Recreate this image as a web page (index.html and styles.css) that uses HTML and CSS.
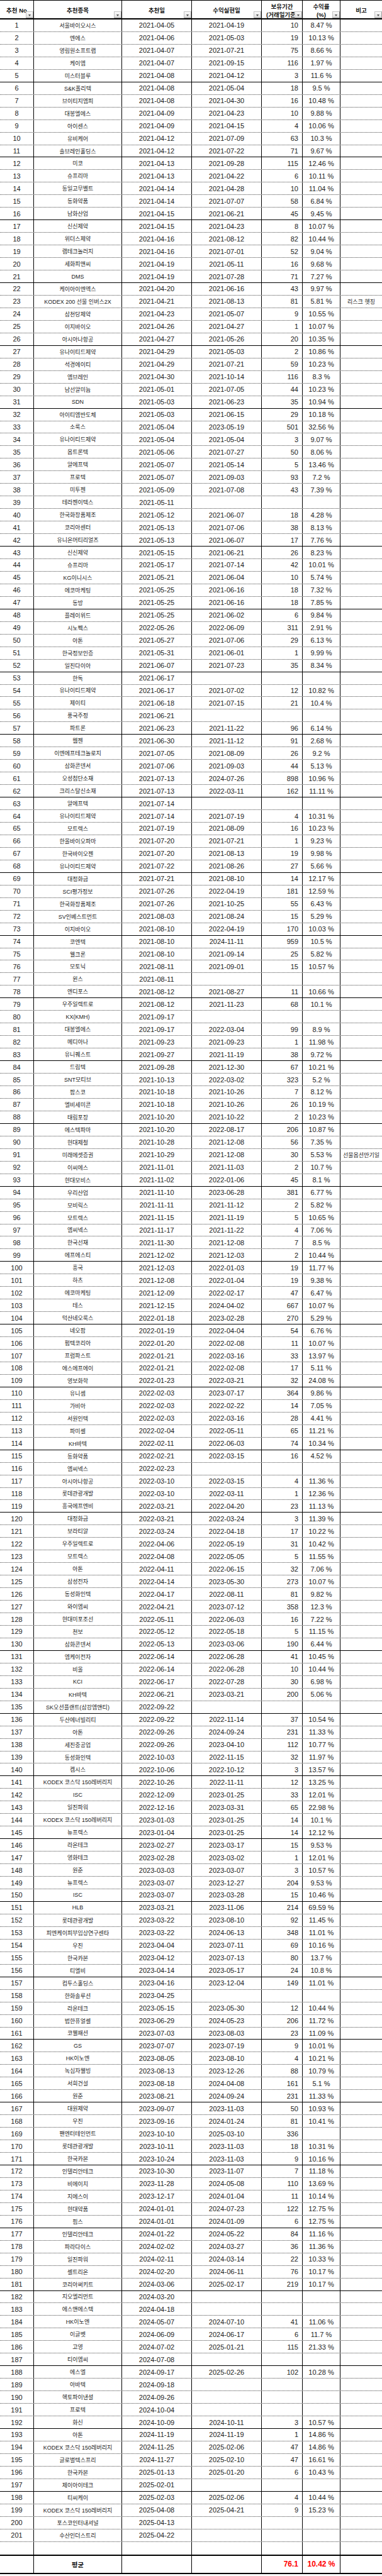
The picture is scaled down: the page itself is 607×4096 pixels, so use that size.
FILE: index.html
```html
<!DOCTYPE html>
<html lang="ko">
<head>
<meta charset="utf-8">
<title>추천종목 수익 현황</title>
<link rel="stylesheet" href="styles.css">
</head>
<body>
<div class="sheet">
  <div class="head">
    <div><span>추천 No</span><i class="fb"></i></div>
    <div><span>추천종목</span><i class="fb"></i></div>
    <div><span>추천일</span><i class="fb"></i></div>
    <div><span>수익실현일</span><i class="fb"></i></div>
    <div><span>보유기간</span><span>(거래일기준)</span><i class="fb"></i></div>
    <div><span>수익률</span><span>(%)</span><i class="fb"></i></div>
    <div><span>비고</span><i class="fb"></i></div>
  </div>
  <div class="row"><span>1</span><span>서울바이오시스</span><span>2021-04-05</span><span>2021-04-19</span><span>10</span><span>8.47 %</span><span></span></div>
  <div class="row"><span>2</span><span>엔에스</span><span>2021-04-06</span><span>2021-05-03</span><span>19</span><span>10.13 %</span><span></span></div>
  <div class="row"><span>3</span><span>영림원소프트랩</span><span>2021-04-07</span><span>2021-07-21</span><span>75</span><span>8.66 %</span><span></span></div>
  <div class="row"><span>4</span><span>케이엠</span><span>2021-04-07</span><span>2021-09-15</span><span>116</span><span>1.97 %</span><span></span></div>
  <div class="row g"><span>5</span><span>미스터블루</span><span>2021-04-08</span><span>2021-04-12</span><span>3</span><span>11.6 %</span><span></span></div>
  <div class="row"><span>6</span><span>S&amp;K폴리텍</span><span>2021-04-08</span><span>2021-05-04</span><span>18</span><span>9.5 %</span><span></span></div>
  <div class="row"><span>7</span><span>브이티지엠피</span><span>2021-04-08</span><span>2021-04-30</span><span>16</span><span>10.48 %</span><span></span></div>
  <div class="row"><span>8</span><span>대봉엘에스</span><span>2021-04-09</span><span>2021-04-23</span><span>10</span><span>9.88 %</span><span></span></div>
  <div class="row"><span>9</span><span>아이센스</span><span>2021-04-09</span><span>2021-04-15</span><span>4</span><span>10.06 %</span><span></span></div>
  <div class="row"><span>10</span><span>유비케어</span><span>2021-04-12</span><span>2021-07-09</span><span>63</span><span>10.3 %</span><span></span></div>
  <div class="row g"><span>11</span><span>솔브레인홀딩스</span><span>2021-04-12</span><span>2021-07-22</span><span>71</span><span>9.67 %</span><span></span></div>
  <div class="row"><span>12</span><span>미코</span><span>2021-04-13</span><span>2021-09-28</span><span>115</span><span>12.46 %</span><span></span></div>
  <div class="row"><span>13</span><span>슈프리마</span><span>2021-04-13</span><span>2021-04-22</span><span>6</span><span>10.11 %</span><span></span></div>
  <div class="row"><span>14</span><span>동일고무벨트</span><span>2021-04-14</span><span>2021-04-28</span><span>10</span><span>11.04 %</span><span></span></div>
  <div class="row"><span>15</span><span>동화약품</span><span>2021-04-14</span><span>2021-07-07</span><span>58</span><span>6.84 %</span><span></span></div>
  <div class="row g"><span>16</span><span>남화산업</span><span>2021-04-15</span><span>2021-06-21</span><span>45</span><span>9.45 %</span><span></span></div>
  <div class="row"><span>17</span><span>신신제약</span><span>2021-04-15</span><span>2021-04-23</span><span>8</span><span>10.07 %</span><span></span></div>
  <div class="row"><span>18</span><span>위더스제약</span><span>2021-04-16</span><span>2021-08-12</span><span>82</span><span>10.44 %</span><span></span></div>
  <div class="row"><span>19</span><span>램테크놀러지</span><span>2021-04-16</span><span>2021-07-01</span><span>52</span><span>9.04 %</span><span></span></div>
  <div class="row"><span>20</span><span>세화피앤씨</span><span>2021-04-19</span><span>2021-05-11</span><span>16</span><span>9.68 %</span><span></span></div>
  <div class="row g"><span>21</span><span>DMS</span><span>2021-04-19</span><span>2021-07-28</span><span>71</span><span>7.27 %</span><span></span></div>
  <div class="row"><span>22</span><span>케이아이엔엑스</span><span>2021-04-20</span><span>2021-06-16</span><span>43</span><span>9.97 %</span><span></span></div>
  <div class="row"><span>23</span><span>KODEX 200 선물 인버스2X</span><span>2021-04-21</span><span>2021-08-13</span><span>81</span><span>5.81 %</span><span>리스크 헷징</span></div>
  <div class="row"><span>24</span><span>삼천당제약</span><span>2021-04-23</span><span>2021-05-07</span><span>9</span><span>10.55 %</span><span></span></div>
  <div class="row"><span>25</span><span>이지바이오</span><span>2021-04-26</span><span>2021-04-27</span><span>1</span><span>10.07 %</span><span></span></div>
  <div class="row g"><span>26</span><span>아시아나항공</span><span>2021-04-27</span><span>2021-05-26</span><span>20</span><span>10.35 %</span><span></span></div>
  <div class="row"><span>27</span><span>유나이티드제약</span><span>2021-04-29</span><span>2021-05-03</span><span>2</span><span>10.86 %</span><span></span></div>
  <div class="row"><span>28</span><span>석경에이티</span><span>2021-04-29</span><span>2021-07-21</span><span>59</span><span>10.23 %</span><span></span></div>
  <div class="row"><span>29</span><span>엠브레인</span><span>2021-04-30</span><span>2021-10-14</span><span>116</span><span>8.3 %</span><span></span></div>
  <div class="row"><span>30</span><span>남선알미늄</span><span>2021-05-01</span><span>2021-07-05</span><span>44</span><span>10.23 %</span><span></span></div>
  <div class="row g"><span>31</span><span>SDN</span><span>2021-05-03</span><span>2021-06-23</span><span>35</span><span>10.94 %</span><span></span></div>
  <div class="row"><span>32</span><span>아이티엠반도체</span><span>2021-05-03</span><span>2021-06-15</span><span>29</span><span>10.18 %</span><span></span></div>
  <div class="row"><span>33</span><span>소룩스</span><span>2021-05-04</span><span>2023-05-19</span><span>501</span><span>32.56 %</span><span></span></div>
  <div class="row"><span>34</span><span>유나이티드제약</span><span>2021-05-04</span><span>2021-05-04</span><span>3</span><span>9.07 %</span><span></span></div>
  <div class="row"><span>35</span><span>옵트론텍</span><span>2021-05-06</span><span>2021-07-27</span><span>50</span><span>8.06 %</span><span></span></div>
  <div class="row"><span>36</span><span>알에프텍</span><span>2021-05-07</span><span>2021-05-14</span><span>5</span><span>13.46 %</span><span></span></div>
  <div class="row"><span>37</span><span>프로텍</span><span>2021-05-07</span><span>2021-09-03</span><span>93</span><span>7.2 %</span><span></span></div>
  <div class="row"><span>38</span><span>미투젠</span><span>2021-05-09</span><span>2021-07-08</span><span>43</span><span>7.39 %</span><span></span></div>
  <div class="row"><span>39</span><span>테라젠이텍스</span><span>2021-05-11</span><span></span><span></span><span></span><span></span></div>
  <div class="row"><span>40</span><span>한국화장품제조</span><span>2021-05-12</span><span>2021-06-07</span><span>18</span><span>4.28 %</span><span></span></div>
  <div class="row"><span>41</span><span>코리아센터</span><span>2021-05-13</span><span>2021-07-06</span><span>38</span><span>8.13 %</span><span></span></div>
  <div class="row g"><span>42</span><span>유니온머티리얼즈</span><span>2021-05-13</span><span>2021-06-07</span><span>17</span><span>7.76 %</span><span></span></div>
  <div class="row"><span>43</span><span>신신제약</span><span>2021-05-15</span><span>2021-06-21</span><span>26</span><span>8.23 %</span><span></span></div>
  <div class="row"><span>44</span><span>슈프리마</span><span>2021-05-17</span><span>2021-07-14</span><span>42</span><span>10.01 %</span><span></span></div>
  <div class="row"><span>45</span><span>KG이니시스</span><span>2021-05-21</span><span>2021-06-04</span><span>10</span><span>5.74 %</span><span></span></div>
  <div class="row"><span>46</span><span>에코마케팅</span><span>2021-05-25</span><span>2021-06-16</span><span>18</span><span>7.32 %</span><span></span></div>
  <div class="row g"><span>47</span><span>동방</span><span>2021-05-25</span><span>2021-06-16</span><span>18</span><span>7.85 %</span><span></span></div>
  <div class="row"><span>48</span><span>플레이위드</span><span>2021-05-25</span><span>2021-06-02</span><span>6</span><span>9.84 %</span><span></span></div>
  <div class="row"><span>49</span><span>시노펙스</span><span>2022-05-26</span><span>2022-06-09</span><span>311</span><span>2.91 %</span><span></span></div>
  <div class="row"><span>50</span><span>아톤</span><span>2021-05-27</span><span>2021-07-06</span><span>29</span><span>6.13 %</span><span></span></div>
  <div class="row"><span>51</span><span>한국정보인증</span><span>2021-05-31</span><span>2021-06-01</span><span>1</span><span>9.99 %</span><span></span></div>
  <div class="row g"><span>52</span><span>일진다이아</span><span>2021-06-07</span><span>2021-07-23</span><span>35</span><span>8.34 %</span><span></span></div>
  <div class="row"><span>53</span><span>한독</span><span>2021-06-17</span><span></span><span></span><span></span><span></span></div>
  <div class="row"><span>54</span><span>유나이티드제약</span><span>2021-06-17</span><span>2021-07-02</span><span>12</span><span>10.82 %</span><span></span></div>
  <div class="row"><span>55</span><span>제이티</span><span>2021-06-18</span><span>2021-07-15</span><span>21</span><span>10.4 %</span><span></span></div>
  <div class="row"><span>56</span><span>풍국주정</span><span>2021-06-21</span><span></span><span></span><span></span><span></span></div>
  <div class="row g"><span>57</span><span>파트론</span><span>2021-06-23</span><span>2021-11-22</span><span>96</span><span>6.14 %</span><span></span></div>
  <div class="row"><span>58</span><span>웹젠</span><span>2021-06-30</span><span>2021-11-12</span><span>91</span><span>2.68 %</span><span></span></div>
  <div class="row"><span>59</span><span>이엔에프테크놀로지</span><span>2021-07-05</span><span>2021-08-09</span><span>26</span><span>9.2 %</span><span></span></div>
  <div class="row"><span>60</span><span>삼화콘덴서</span><span>2021-07-06</span><span>2021-09-03</span><span>44</span><span>5.13 %</span><span></span></div>
  <div class="row"><span>61</span><span>오성첨단소재</span><span>2021-07-13</span><span>2024-07-26</span><span>898</span><span>10.96 %</span><span></span></div>
  <div class="row g"><span>62</span><span>크리스탈신소재</span><span>2021-07-13</span><span>2022-03-11</span><span>162</span><span>11.11 %</span><span></span></div>
  <div class="row"><span>63</span><span>알에프텍</span><span>2021-07-14</span><span></span><span></span><span></span><span></span></div>
  <div class="row"><span>64</span><span>유나이티드제약</span><span>2021-07-14</span><span>2021-07-19</span><span>4</span><span>10.31 %</span><span></span></div>
  <div class="row"><span>65</span><span>모트렉스</span><span>2021-07-19</span><span>2021-08-09</span><span>16</span><span>10.23 %</span><span></span></div>
  <div class="row"><span>66</span><span>한올바이오파마</span><span>2021-07-20</span><span>2021-07-21</span><span>1</span><span>9.23 %</span><span></span></div>
  <div class="row"><span>67</span><span>한국바이오젠</span><span>2021-07-20</span><span>2021-08-13</span><span>19</span><span>9.98 %</span><span></span></div>
  <div class="row g"><span>68</span><span>유나이티드제약</span><span>2021-07-22</span><span>2021-08-26</span><span>27</span><span>5.66 %</span><span></span></div>
  <div class="row"><span>69</span><span>대정화금</span><span>2021-07-21</span><span>2021-08-10</span><span>14</span><span>12.17 %</span><span></span></div>
  <div class="row"><span>70</span><span>SCI평가정보</span><span>2021-07-26</span><span>2022-04-19</span><span>181</span><span>12.59 %</span><span></span></div>
  <div class="row"><span>71</span><span>한국화장품제조</span><span>2021-07-26</span><span>2021-10-25</span><span>55</span><span>6.43 %</span><span></span></div>
  <div class="row"><span>72</span><span>SV인베스트먼트</span><span>2021-08-03</span><span>2021-08-24</span><span>15</span><span>5.29 %</span><span></span></div>
  <div class="row g"><span>73</span><span>이지바이오</span><span>2021-08-10</span><span>2022-04-19</span><span>170</span><span>10.03 %</span><span></span></div>
  <div class="row"><span>74</span><span>코엔텍</span><span>2021-08-10</span><span>2024-11-11</span><span>959</span><span>10.5 %</span><span></span></div>
  <div class="row"><span>75</span><span>웰크론</span><span>2021-08-10</span><span>2021-09-14</span><span>25</span><span>5.82 %</span><span></span></div>
  <div class="row"><span>76</span><span>모토닉</span><span>2021-08-11</span><span>2021-09-01</span><span>15</span><span>10.57 %</span><span></span></div>
  <div class="row"><span>77</span><span>윈스</span><span>2021-08-11</span><span></span><span></span><span></span><span></span></div>
  <div class="row g"><span>78</span><span>엔디포스</span><span>2021-08-12</span><span>2021-08-27</span><span>11</span><span>10.66 %</span><span></span></div>
  <div class="row"><span>79</span><span>우주일렉트로</span><span>2021-08-12</span><span>2021-11-23</span><span>68</span><span>10.1 %</span><span></span></div>
  <div class="row"><span>80</span><span>KX(KMH)</span><span>2021-09-17</span><span></span><span></span><span></span><span></span></div>
  <div class="row"><span>81</span><span>대봉엘에스</span><span>2021-09-17</span><span>2022-03-04</span><span>99</span><span>8.9 %</span><span></span></div>
  <div class="row"><span>82</span><span>메디아나</span><span>2021-09-23</span><span>2021-09-23</span><span>1</span><span>11.98 %</span><span></span></div>
  <div class="row g"><span>83</span><span>유니퀘스트</span><span>2021-09-27</span><span>2021-11-19</span><span>38</span><span>9.72 %</span><span></span></div>
  <div class="row"><span>84</span><span>드림텍</span><span>2021-09-28</span><span>2021-12-30</span><span>67</span><span>10.21 %</span><span></span></div>
  <div class="row"><span>85</span><span>SNT모티브</span><span>2021-10-13</span><span>2022-03-02</span><span>323</span><span>5.2 %</span><span></span></div>
  <div class="row"><span>86</span><span>팜스코</span><span>2021-10-18</span><span>2021-10-26</span><span>7</span><span>8.12 %</span><span></span></div>
  <div class="row"><span>87</span><span>엘비세미콘</span><span>2021-10-18</span><span>2021-10-26</span><span>26</span><span>10.19 %</span><span></span></div>
  <div class="row g"><span>88</span><span>태림포장</span><span>2021-10-20</span><span>2021-10-22</span><span>2</span><span>10.23 %</span><span></span></div>
  <div class="row"><span>89</span><span>에스텍파마</span><span>2021-10-20</span><span>2022-08-17</span><span>206</span><span>10.87 %</span><span></span></div>
  <div class="row"><span>90</span><span>현대제철</span><span>2021-10-28</span><span>2021-12-08</span><span>56</span><span>7.35 %</span><span></span></div>
  <div class="row"><span>91</span><span>미래에셋증권</span><span>2021-10-29</span><span>2021-12-08</span><span>30</span><span>5.53 %</span><span>선물옵션만기일</span></div>
  <div class="row"><span>92</span><span>이씨에스</span><span>2021-11-01</span><span>2021-11-03</span><span>2</span><span>10.7 %</span><span></span></div>
  <div class="row g"><span>93</span><span>현대모비스</span><span>2021-11-02</span><span>2022-01-06</span><span>45</span><span>8.1 %</span><span></span></div>
  <div class="row"><span>94</span><span>우리산업</span><span>2021-11-10</span><span>2023-06-28</span><span>381</span><span>6.77 %</span><span></span></div>
  <div class="row"><span>95</span><span>모비릭스</span><span>2021-11-11</span><span>2021-11-12</span><span>2</span><span>5.82 %</span><span></span></div>
  <div class="row"><span>96</span><span>모트렉스</span><span>2021-11-15</span><span>2021-11-19</span><span>5</span><span>10.65 %</span><span></span></div>
  <div class="row"><span>97</span><span>엠씨넥스</span><span>2021-11-17</span><span>2021-11-22</span><span>4</span><span>7.06 %</span><span></span></div>
  <div class="row"><span>98</span><span>한국선재</span><span>2021-11-30</span><span>2021-12-08</span><span>7</span><span>8.5 %</span><span></span></div>
  <div class="row g"><span>99</span><span>에프에스티</span><span>2021-12-02</span><span>2021-12-03</span><span>2</span><span>10.44 %</span><span></span></div>
  <div class="row"><span>100</span><span>흥국</span><span>2021-12-03</span><span>2022-01-03</span><span>19</span><span>11.77 %</span><span></span></div>
  <div class="row"><span>101</span><span>하츠</span><span>2021-12-08</span><span>2022-01-04</span><span>19</span><span>9.38 %</span><span></span></div>
  <div class="row"><span>102</span><span>에코마케팅</span><span>2021-12-09</span><span>2022-02-17</span><span>47</span><span>6.47 %</span><span></span></div>
  <div class="row"><span>103</span><span>테스</span><span>2021-12-15</span><span>2024-04-02</span><span>667</span><span>10.07 %</span><span></span></div>
  <div class="row g"><span>104</span><span>덕산네오룩스</span><span>2022-01-18</span><span>2023-02-28</span><span>270</span><span>5.29 %</span><span></span></div>
  <div class="row"><span>105</span><span>네오팜</span><span>2022-01-19</span><span>2022-04-04</span><span>54</span><span>6.76 %</span><span></span></div>
  <div class="row"><span>106</span><span>펌텍코리아</span><span>2022-01-20</span><span>2022-02-08</span><span>11</span><span>10.07 %</span><span></span></div>
  <div class="row"><span>107</span><span>프럼파스트</span><span>2022-01-21</span><span>2022-03-16</span><span>33</span><span>13.97 %</span><span></span></div>
  <div class="row"><span>108</span><span>에스에프에이</span><span>2022-01-21</span><span>2022-02-08</span><span>17</span><span>5.11 %</span><span></span></div>
  <div class="row g"><span>109</span><span>영보화학</span><span>2022-01-23</span><span>2022-03-21</span><span>32</span><span>24.08 %</span><span></span></div>
  <div class="row"><span>110</span><span>유니셈</span><span>2022-02-03</span><span>2023-07-17</span><span>364</span><span>9.86 %</span><span></span></div>
  <div class="row"><span>111</span><span>가비아</span><span>2022-02-03</span><span>2022-02-22</span><span>14</span><span>7.05 %</span><span></span></div>
  <div class="row"><span>112</span><span>서원인텍</span><span>2022-02-03</span><span>2022-03-16</span><span>28</span><span>4.41 %</span><span></span></div>
  <div class="row"><span>113</span><span>파미셀</span><span>2022-02-04</span><span>2022-05-11</span><span>65</span><span>11.21 %</span><span></span></div>
  <div class="row g"><span>114</span><span>KH바텍</span><span>2022-02-11</span><span>2022-06-03</span><span>74</span><span>10.34 %</span><span></span></div>
  <div class="row"><span>115</span><span>동화약품</span><span>2022-02-21</span><span>2022-03-15</span><span>16</span><span>4.52 %</span><span></span></div>
  <div class="row"><span>116</span><span>엠씨넥스</span><span>2022-02-23</span><span></span><span></span><span></span><span></span></div>
  <div class="row"><span>117</span><span>아시아나항공</span><span>2022-03-10</span><span>2022-03-15</span><span>4</span><span>11.36 %</span><span></span></div>
  <div class="row"><span>118</span><span>롯데관광개발</span><span>2022-03-10</span><span>2022-03-11</span><span>1</span><span>12.36 %</span><span></span></div>
  <div class="row g"><span>119</span><span>흥국에프엔비</span><span>2022-03-21</span><span>2022-04-20</span><span>23</span><span>11.13 %</span><span></span></div>
  <div class="row"><span>120</span><span>대정화금</span><span>2022-03-21</span><span>2022-03-24</span><span>3</span><span>11.39 %</span><span></span></div>
  <div class="row"><span>121</span><span>보라티알</span><span>2022-03-24</span><span>2022-04-18</span><span>17</span><span>10.22 %</span><span></span></div>
  <div class="row"><span>122</span><span>우주일렉트로</span><span>2022-04-06</span><span>2022-05-19</span><span>31</span><span>10.42 %</span><span></span></div>
  <div class="row"><span>123</span><span>모트렉스</span><span>2022-04-08</span><span>2022-05-05</span><span>5</span><span>11.55 %</span><span></span></div>
  <div class="row"><span>124</span><span>아톤</span><span>2022-04-11</span><span>2022-06-15</span><span>32</span><span>7.06 %</span><span></span></div>
  <div class="row"><span>125</span><span>삼성전자</span><span>2022-04-14</span><span>2023-05-30</span><span>273</span><span>10.07 %</span><span></span></div>
  <div class="row"><span>126</span><span>동성화인텍</span><span>2022-04-17</span><span>2022-08-11</span><span>81</span><span>9.82 %</span><span></span></div>
  <div class="row"><span>127</span><span>와이엠씨</span><span>2022-04-21</span><span>2023-07-12</span><span>358</span><span>12.3 %</span><span></span></div>
  <div class="row"><span>128</span><span>현대미포조선</span><span>2022-05-11</span><span>2022-06-03</span><span>16</span><span>7.22 %</span><span></span></div>
  <div class="row"><span>129</span><span>천보</span><span>2022-05-12</span><span>2022-05-18</span><span>5</span><span>11.15 %</span><span></span></div>
  <div class="row g"><span>130</span><span>삼화콘덴서</span><span>2022-05-13</span><span>2023-03-06</span><span>190</span><span>6.44 %</span><span></span></div>
  <div class="row"><span>131</span><span>엠케이전자</span><span>2022-06-14</span><span>2022-06-28</span><span>41</span><span>10.45 %</span><span></span></div>
  <div class="row"><span>132</span><span>비올</span><span>2022-06-14</span><span>2022-06-28</span><span>10</span><span>10.44 %</span><span></span></div>
  <div class="row"><span>133</span><span>KCI</span><span>2022-06-17</span><span>2022-07-28</span><span>30</span><span>6.98 %</span><span></span></div>
  <div class="row"><span>134</span><span>KH바텍</span><span>2022-06-21</span><span>2023-03-21</span><span>200</span><span>5.06 %</span><span></span></div>
  <div class="row g"><span>135</span><span>SK오션플랜트(삼강엠앤티)</span><span>2022-09-22</span><span></span><span></span><span></span><span></span></div>
  <div class="row"><span>136</span><span>두산에너빌리티</span><span>2022-09-22</span><span>2022-11-14</span><span>37</span><span>10.54 %</span><span></span></div>
  <div class="row"><span>137</span><span>아톤</span><span>2022-09-26</span><span>2024-09-24</span><span>231</span><span>11.33 %</span><span></span></div>
  <div class="row"><span>138</span><span>세진중공업</span><span>2022-09-26</span><span>2023-04-10</span><span>112</span><span>10.77 %</span><span></span></div>
  <div class="row"><span>139</span><span>동성화인텍</span><span>2022-10-03</span><span>2022-11-15</span><span>32</span><span>11.97 %</span><span></span></div>
  <div class="row g"><span>140</span><span>켐시스</span><span>2022-10-06</span><span>2022-10-12</span><span>3</span><span>13.57 %</span><span></span></div>
  <div class="row"><span>141</span><span>KODEX 코스닥 150레버리지</span><span>2022-10-26</span><span>2022-11-11</span><span>12</span><span>13.25 %</span><span></span></div>
  <div class="row"><span>142</span><span>ISC</span><span>2022-12-09</span><span>2023-01-25</span><span>33</span><span>12.01 %</span><span></span></div>
  <div class="row"><span>143</span><span>일진파워</span><span>2022-12-16</span><span>2023-03-31</span><span>65</span><span>22.98 %</span><span></span></div>
  <div class="row"><span>144</span><span>KODEX 코스닥 150레버리지</span><span>2023-01-03</span><span>2023-01-25</span><span>14</span><span>10.1 %</span><span></span></div>
  <div class="row g"><span>145</span><span>뉴프렉스</span><span>2023-01-04</span><span>2023-01-25</span><span>14</span><span>12.12 %</span><span></span></div>
  <div class="row"><span>146</span><span>라온테크</span><span>2023-02-27</span><span>2023-03-17</span><span>15</span><span>9.53 %</span><span></span></div>
  <div class="row"><span>147</span><span>영화테크</span><span>2023-02-28</span><span>2023-03-02</span><span>1</span><span>12.01 %</span><span></span></div>
  <div class="row"><span>148</span><span>원준</span><span>2023-03-03</span><span>2023-03-07</span><span>3</span><span>10.57 %</span><span></span></div>
  <div class="row"><span>149</span><span>뉴프렉스</span><span>2023-03-07</span><span>2023-12-27</span><span>204</span><span>9.53 %</span><span></span></div>
  <div class="row g"><span>150</span><span>ISC</span><span>2023-03-07</span><span>2023-03-28</span><span>15</span><span>10.46 %</span><span></span></div>
  <div class="row"><span>151</span><span>HLB</span><span>2023-03-21</span><span>2023-11-06</span><span>214</span><span>69.59 %</span><span></span></div>
  <div class="row"><span>152</span><span>롯데관광개발</span><span>2023-03-22</span><span>2023-08-10</span><span>92</span><span>11.45 %</span><span></span></div>
  <div class="row"><span>153</span><span>피엔케이피부임상연구센타</span><span>2023-03-22</span><span>2024-06-13</span><span>348</span><span>11.01 %</span><span></span></div>
  <div class="row"><span>154</span><span>우진</span><span>2023-04-04</span><span>2023-07-11</span><span>69</span><span>10.16 %</span><span></span></div>
  <div class="row"><span>155</span><span>한국카본</span><span>2023-04-12</span><span>2023-07-13</span><span>80</span><span>13.7 %</span><span></span></div>
  <div class="row g"><span>156</span><span>티엘비</span><span>2023-04-14</span><span>2023-05-17</span><span>24</span><span>10.8 %</span><span></span></div>
  <div class="row"><span>157</span><span>컴투스홀딩스</span><span>2023-04-16</span><span>2023-12-04</span><span>149</span><span>11.01 %</span><span></span></div>
  <div class="row"><span>158</span><span>한화솔루션</span><span>2023-04-25</span><span></span><span></span><span></span><span></span></div>
  <div class="row"><span>159</span><span>라온테크</span><span>2023-05-15</span><span>2023-05-30</span><span>12</span><span>10.44 %</span><span></span></div>
  <div class="row"><span>160</span><span>범한퓨얼셀</span><span>2023-06-29</span><span>2024-05-23</span><span>206</span><span>11.72 %</span><span></span></div>
  <div class="row g"><span>161</span><span>코웰패션</span><span>2023-07-03</span><span>2023-08-03</span><span>23</span><span>11.09 %</span><span></span></div>
  <div class="row"><span>162</span><span>GS</span><span>2023-07-07</span><span>2023-07-19</span><span>9</span><span>10.01 %</span><span></span></div>
  <div class="row"><span>163</span><span>HK이노엔</span><span>2023-08-05</span><span>2023-08-10</span><span>4</span><span>10.21 %</span><span></span></div>
  <div class="row"><span>164</span><span>녹십자웰빙</span><span>2023-08-13</span><span>2023-12-26</span><span>88</span><span>10.79 %</span><span></span></div>
  <div class="row"><span>165</span><span>서희건설</span><span>2023-08-18</span><span>2024-04-08</span><span>161</span><span>5.1 %</span><span></span></div>
  <div class="row g"><span>166</span><span>원준</span><span>2023-08-21</span><span>2024-09-24</span><span>231</span><span>11.33 %</span><span></span></div>
  <div class="row"><span>167</span><span>대원제약</span><span>2023-09-07</span><span>2023-11-03</span><span>50</span><span>10.93 %</span><span></span></div>
  <div class="row"><span>168</span><span>우진</span><span>2023-09-16</span><span>2024-01-24</span><span>81</span><span>10.41 %</span><span></span></div>
  <div class="row"><span>169</span><span>팬엔터테인먼트</span><span>2023-10-10</span><span>2025-03-10</span><span>336</span><span></span><span></span></div>
  <div class="row"><span>170</span><span>롯데관광개발</span><span>2023-10-11</span><span>2023-11-03</span><span>18</span><span>10.31 %</span><span></span></div>
  <div class="row g"><span>171</span><span>한국카본</span><span>2023-10-24</span><span>2023-11-03</span><span>9</span><span>10.16 %</span><span></span></div>
  <div class="row"><span>172</span><span>인텔리안테크</span><span>2023-10-30</span><span>2023-11-07</span><span>7</span><span>11.18 %</span><span></span></div>
  <div class="row"><span>173</span><span>비에이치</span><span>2023-11-28</span><span>2024-05-08</span><span>110</span><span>13.69 %</span><span></span></div>
  <div class="row"><span>174</span><span>지에스이</span><span>2023-12-17</span><span>2024-01-04</span><span>11</span><span>10.14 %</span><span></span></div>
  <div class="row"><span>175</span><span>현대약품</span><span>2024-01-01</span><span>2024-07-23</span><span>122</span><span>12.75 %</span><span></span></div>
  <div class="row g"><span>176</span><span>핌스</span><span>2024-01-01</span><span>2024-01-09</span><span>6</span><span>12.75 %</span><span></span></div>
  <div class="row"><span>177</span><span>인텔리안테크</span><span>2024-01-22</span><span>2024-05-22</span><span>84</span><span>11.16 %</span><span></span></div>
  <div class="row"><span>178</span><span>파라다이스</span><span>2024-02-02</span><span>2024-03-27</span><span>36</span><span>11.36 %</span><span></span></div>
  <div class="row"><span>179</span><span>일진파워</span><span>2024-02-11</span><span>2024-03-14</span><span>22</span><span>10.33 %</span><span></span></div>
  <div class="row"><span>180</span><span>셀트리온</span><span>2024-02-20</span><span>2024-06-11</span><span>76</span><span>10.17 %</span><span></span></div>
  <div class="row g"><span>181</span><span>코리아써키트</span><span>2024-03-06</span><span>2025-02-17</span><span>219</span><span>10.17 %</span><span></span></div>
  <div class="row"><span>182</span><span>지오엘리먼트</span><span>2024-03-20</span><span></span><span></span><span></span><span></span></div>
  <div class="row"><span>183</span><span>에스앤에스텍</span><span>2024-04-18</span><span></span><span></span><span></span><span></span></div>
  <div class="row"><span>184</span><span>HK이노엔</span><span>2024-05-07</span><span>2024-07-10</span><span>41</span><span>11.06 %</span><span></span></div>
  <div class="row"><span>185</span><span>이글벳</span><span>2024-06-09</span><span>2024-06-17</span><span>6</span><span>11.7 %</span><span></span></div>
  <div class="row"><span>186</span><span>고영</span><span>2024-07-02</span><span>2025-01-21</span><span>115</span><span>21.33 %</span><span></span></div>
  <div class="row g"><span>187</span><span>티이엠씨</span><span>2024-07-08</span><span></span><span></span><span></span><span></span></div>
  <div class="row"><span>188</span><span>에스엘</span><span>2024-09-17</span><span>2025-02-26</span><span>102</span><span>10.28 %</span><span></span></div>
  <div class="row"><span>189</span><span>아바텍</span><span>2024-09-18</span><span></span><span></span><span></span><span></span></div>
  <div class="row"><span>190</span><span>헥토파이낸셜</span><span>2024-09-26</span><span></span><span></span><span></span><span></span></div>
  <div class="row"><span>191</span><span>프로텍</span><span>2024-10-04</span><span></span><span></span><span></span><span></span></div>
  <div class="row g"><span>192</span><span>화신</span><span>2024-10-09</span><span>2024-10-11</span><span>3</span><span>10.57 %</span><span></span></div>
  <div class="row"><span>193</span><span>아톤</span><span>2024-11-19</span><span>2024-11-19</span><span>1</span><span>14.86 %</span><span></span></div>
  <div class="row"><span>194</span><span>KODEX 코스닥 150레버리지</span><span>2024-11-25</span><span>2025-02-06</span><span>47</span><span>14.86 %</span><span></span></div>
  <div class="row"><span>195</span><span>글로벌텍스프리</span><span>2024-11-27</span><span>2025-02-10</span><span>47</span><span>16.61 %</span><span></span></div>
  <div class="row"><span>196</span><span>한국카본</span><span>2025-01-13</span><span>2025-01-20</span><span>6</span><span>10.43 %</span><span></span></div>
  <div class="row g"><span>197</span><span>제이아이테크</span><span>2025-02-01</span><span></span><span></span><span></span><span></span></div>
  <div class="row"><span>198</span><span>티씨케이</span><span>2025-02-03</span><span>2025-02-06</span><span>4</span><span>10.44 %</span><span></span></div>
  <div class="row"><span>199</span><span>KODEX 코스닥 150레버리지</span><span>2025-04-08</span><span>2025-04-21</span><span>9</span><span>15.23 %</span><span></span></div>
  <div class="row"><span>200</span><span>포스코인터내셔널</span><span>2025-04-13</span><span></span><span></span><span></span><span></span></div>
  <div class="row"><span>201</span><span>수산인더스트리</span><span>2025-04-22</span><span></span><span></span><span></span><span></span></div>
  <div class="row blank"><span></span><span></span><span></span><span></span><span></span><span></span><span></span></div>
  <div class="total"><span></span><span class="avg">평균</span><span></span><span></span><span class="red days">76.1</span><span class="red">10.42 %</span><span></span></div>
</div>
</body>
</html>
```

FILE: styles.css
```css
* {
  box-sizing: border-box;
}

body {
  margin: 0;
  background: #ffffff;
  font-family: "Liberation Sans", "Noto Sans CJK KR", sans-serif;
  color: #1c1c1c;
}

.sheet {
  width: 607px;
}

.head,
.row,
.total {
  display: grid;
  grid-template-columns: 54px 140px 111px 111px 65px 60px 66px;
}

/* header */
.head {
  height: 31px;
  border-top: 1px solid #000;
  border-bottom: 2px solid #000;
}

.head > div {
  position: relative;
  display: flex;
  flex-direction: column;
  align-items: center;
  justify-content: center;
  padding-top: 3px;
  border-right: 1px solid #000;
  font-size: 9.5px;
  font-weight: 700;
  line-height: 13px;
  color: #111;
  white-space: nowrap;
  overflow: hidden;
}

/* excel autofilter button */
.fb {
  position: absolute;
  right: 0;
  bottom: 0;
  width: 12px;
  height: 11px;
  background: linear-gradient(#fbfbfb, #dcdcdc);
  border: 1px solid #c4c4c4;
  border-right-color: #9c9c9c;
  border-bottom-color: #8c8c8c;
}

.fb::after {
  content: "";
  position: absolute;
  left: 50%;
  top: 4px;
  margin-left: -2.5px;
  border-left: 2.5px solid transparent;
  border-right: 2.5px solid transparent;
  border-top: 3px solid #555;
}

/* data rows */
.row {
  height: 19.965px;
  border-bottom: 1px dotted #4a4a4a;
}

.row.g {
  border-bottom: 1px solid #000;
}

.row.blank {
  border-bottom: 0;
}

.row > span,
.total > span {
  display: flex;
  align-items: center;
  justify-content: center;
  border-right: 1px solid #000;
  white-space: nowrap;
  overflow: hidden;
  font-size: 11px;
}

.head > div:last-child,
.row > span:last-child,
.total > span:last-child {
  border-right: 0;
}

.row > span:nth-child(2),
.row > span:nth-child(7) {
  font-size: 9px;
}

.row > span:nth-child(5) {
  justify-content: flex-end;
  padding-right: 6px;
}

/* total */
.total {
  height: 31.1px;
  border-top: 2px solid #000;
  border-bottom: 2px solid #000;
}

.total .avg {
  font-size: 10.5px;
  font-weight: 700;
  color: #111;
}

.total .red {
  color: #ff0000;
  font-size: 12px;
  font-weight: 700;
}

.total .days {
  justify-content: flex-end;
  padding-right: 6px;
}
```
